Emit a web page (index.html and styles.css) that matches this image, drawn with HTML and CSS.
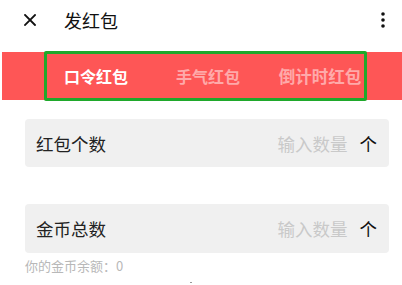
FILE: index.html
```html
<!DOCTYPE html>
<html lang="zh">
<head>
<meta charset="utf-8">
<link rel="stylesheet" href="styles.css">
</head>
<body>
<div class="page">
  <header class="topbar">
    <svg class="close" width="12" height="12" viewBox="0 0 12 12"><path d="M1 1 L11 11 M11 1 L1 11" stroke="#111" stroke-width="1.8" stroke-linecap="square"/></svg>
    <span class="title">发红包</span>
    <svg class="more" width="4" height="16" viewBox="0 0 4 16"><circle cx="2" cy="2" r="1.8" fill="#111"/><circle cx="2" cy="8" r="1.8" fill="#111"/><circle cx="2" cy="14" r="1.8" fill="#111"/></svg>
  </header>
  <nav class="tabbar">
    <div class="tabs">
      <span class="tab active">口令红包</span>
      <span class="tab">手气红包</span>
      <span class="tab">倒计时红包</span>
    </div>
    <div class="highlight"></div>
  </nav>
  <div class="field first">
    <span class="label">红包个数</span>
    <span class="placeholder">输入数量</span>
    <span class="unit">个</span>
  </div>
  <div class="field second">
    <span class="label">金币总数</span>
    <span class="placeholder">输入数量</span>
    <span class="unit">个</span>
  </div>
  <div class="hint">你的金币余额：0</div>
  <div class="dot"></div>
</div>
</body>
</html>
```
FILE: styles.css
```css
* { box-sizing: border-box; }
html, body { margin: 0; padding: 0; background: #fff; }
body { font-family: "Noto Sans CJK SC", "Noto Sans", sans-serif; width: 402px; height: 285px; overflow: hidden; }
.page { display: flex; flex-direction: column; }
.topbar { height: 40px; display: flex; align-items: center; padding: 0 17px 0 24px; }
.close { flex: none; }
.title { margin-left: 28px; font-size: 18px; color: #111; line-height: 20px; }
.more { margin-left: auto; }
.tabbar { position: relative; margin: 12px 0 0 2px; height: 48px; background: #fe5656; }
.tabs { display: grid; grid-template-columns: 112px 112px 112px; margin-left: 38px; height: 100%; align-items: center; }
.tab { text-align: center; font-size: 16px; font-weight: bold; color: rgba(255,255,255,0.5); line-height: 20px; }
.tab.active { color: #fff; }
.tab:last-child { font-size: 16.5px; }
.highlight { position: absolute; left: 42px; top: -1px; width: 323px; height: 50px; border: 3px solid #1fa82b; border-radius: 2px; }
.field { margin: 19px 13px 0 25px; height: 48px; background: #f0f0f0; border-radius: 4px; display: flex; align-items: center; padding: 0 12px 0 11px; }
.field.second { margin-top: 37px; height: 49px; }
.label { font-size: 17.5px; color: #222; }
.placeholder { margin-left: auto; font-size: 17.5px; color: #c9c9c9; }
.unit { margin-left: 12px; font-size: 17.5px; color: #111; }
.hint { margin: 5px 0 0 25px; font-size: 13px; line-height: 16px; color: #b8b8b8; }
.dot { margin: 8px 0 0 190px; width: 2px; height: 1px; background: #999; }
```
